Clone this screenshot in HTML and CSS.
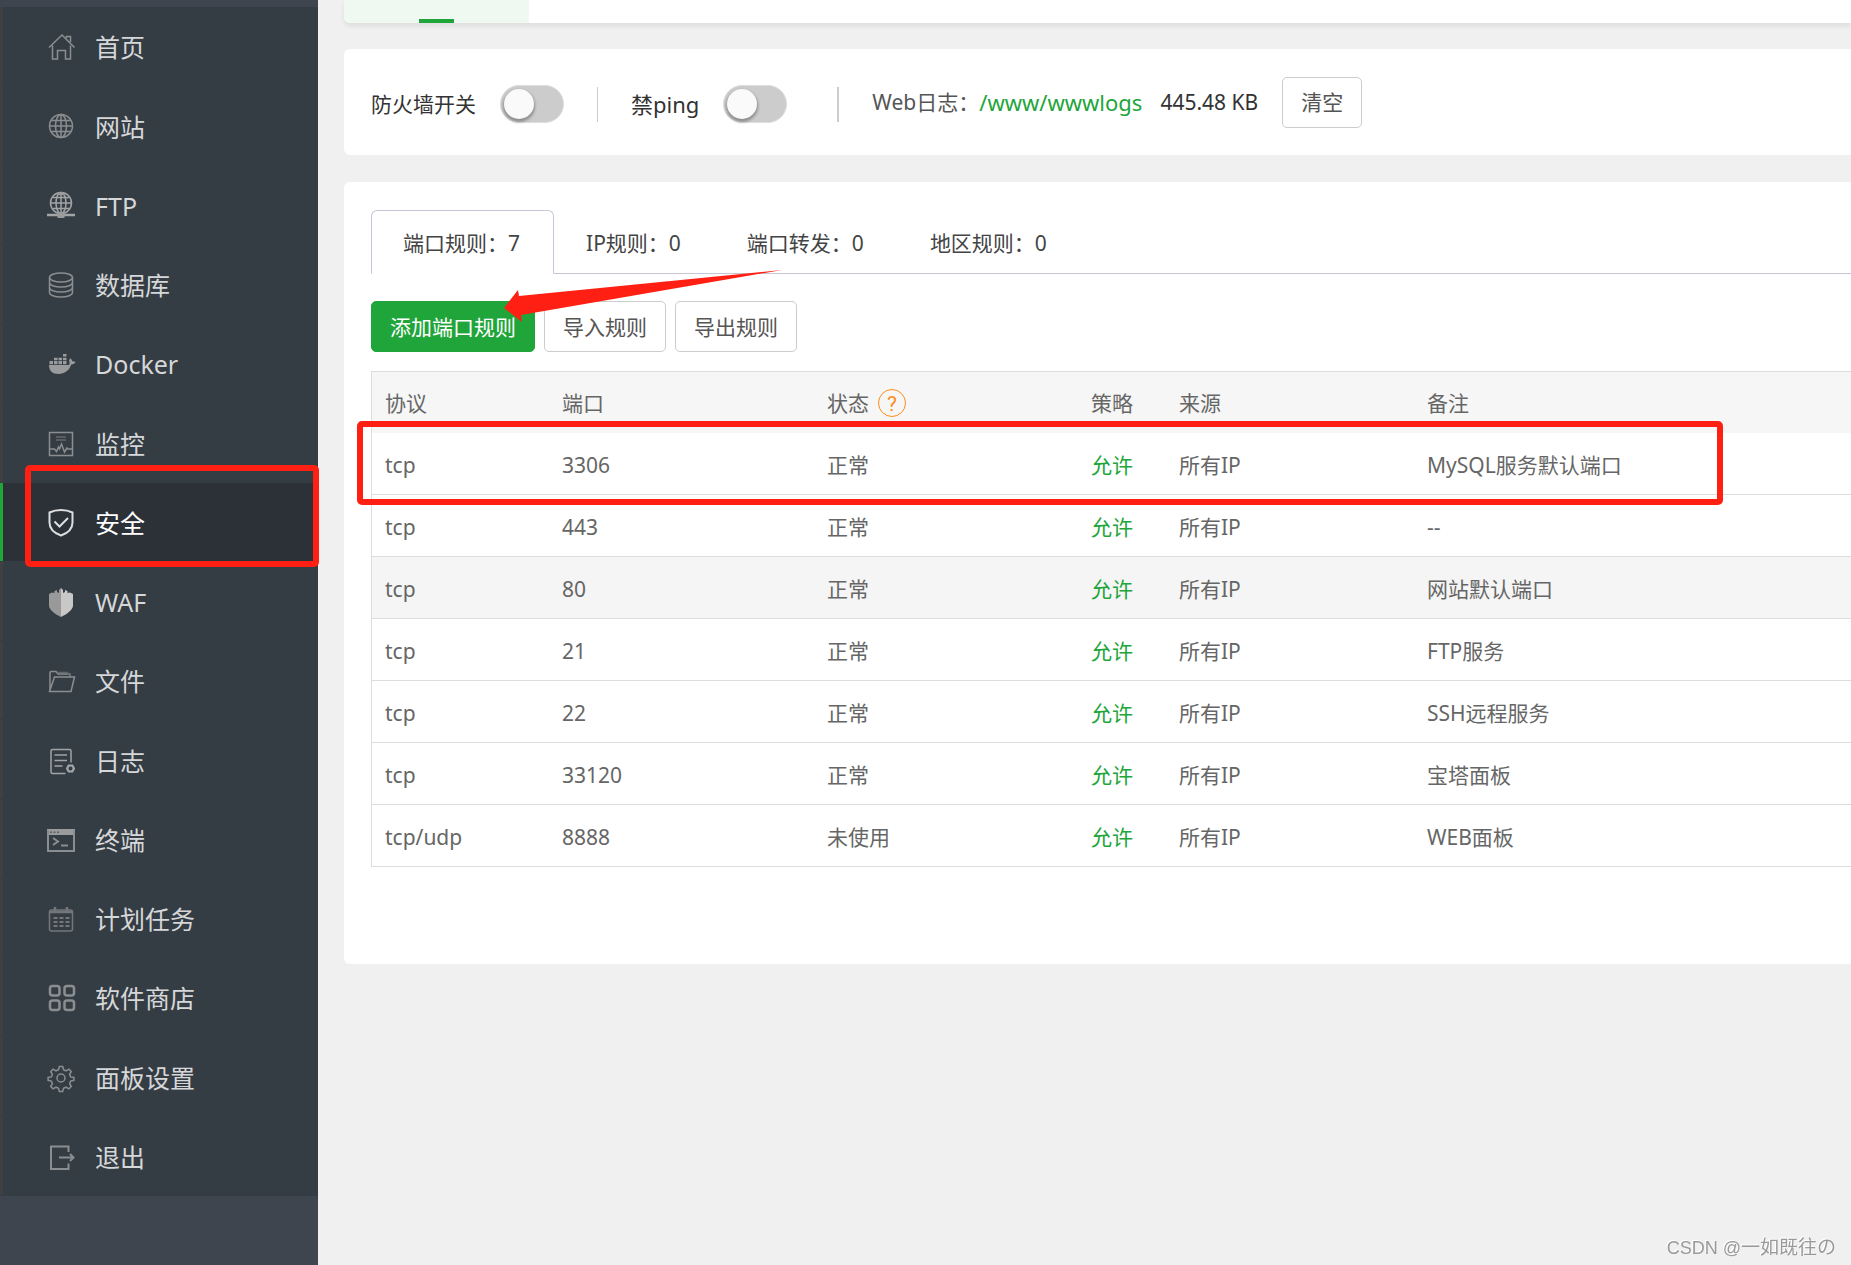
FILE: index.html
```html
<!DOCTYPE html>
<html lang="zh-CN">
<head>
<meta charset="utf-8">
<meta name="viewport" content="width=device-width, initial-scale=1">
<title>安全</title>
<link rel="stylesheet" href="styles.css">
</head>
<body>
<div class="layout">
  <nav class="sidebar">
    <ul class="menu">
      <li><a href="#home"><svg class="icon" viewBox="0 0 28 28"><path d="M2 14.500 15 2l12.500 12.500M5.500 12.500V26h5v-8.500h8V26h5V12.500M19.500 5V3.500h4V9"/></svg>首页</a></li>
      <li><a href="#site"><svg class="icon" viewBox="0 0 28 28"><circle cx="14" cy="13" r="11.500"/><ellipse cx="14" cy="13" rx="5.500" ry="11.500"/><path d="M14 1.500v23M2.500 13h23M4.500 7.500h19M4.500 18.500h19"/></svg>网站</a></li>
      <li><a href="#ftp"><svg class="icon bright" viewBox="0 0 28 28"><circle cx="14" cy="11" r="10.500"/><ellipse cx="14" cy="11" rx="5" ry="10.500"/><path d="M14 .5v21M3.500 11h21M6 5.500h16M6 16.500h16"/><path d="M0 23h28" stroke-width="2.500"/><path class="solid" d="M10.500 20.500h7V26h-7zM11 0h6v3h-6z"/></svg>FTP</a></li>
      <li><a href="#database"><svg class="icon" viewBox="0 0 28 28"><ellipse cx="14" cy="6.500" rx="11.500" ry="4.500"/><path d="M2.500 6.500v15c0 2.500 5 4.500 11.500 4.500s11.500-2 11.500-4.500v-15M2.500 11.500C2.500 14 7.500 16 14 16s11.500-2 11.500-4.500M2.500 16.500C2.500 19 7.500 21 14 21s11.500-2 11.500-4.500"/></svg>数据库</a></li>
      <li><a href="#docker"><svg class="icon bright" viewBox="0 0 28 28"><path class="solid" d="M2 15h18.500c1.500 0 2.500-.5 2-2.500-.6-1.600-.3-3 .8-4.200 1.300.8 1.900 1.900 2 3.100 1.200-.3 2.200 0 3.200.7-.8 1.700-2.200 2.500-4.300 2.500C22 21 17.500 24 11.500 24 5.500 24 2 21 2 15zM2.500 11h3.500v3.300H2.500zM7 11h3.500v3.300H7zM11.500 11h3.500v3.300h-3.500zM16 11h3.500v3.300H16zM7 7.700h3.500v2.500H7zM11.500 7.700h3.500v2.500h-3.500zM16 7.700h3.500v2.500H16zM16 4h3.500v2.500H16z"/></svg>Docker</a></li>
      <li><a href="#monitor"><svg class="icon" viewBox="0 0 28 28"><path d="M2.500 2.500h23v23h-23zM3 19h4.500l2 2.500 2-4.500 1 2 2-5 3 8 2.500-4 1 1h4.500"/><path class="faint" d="M9 7h10M9 10h10"/></svg>监控</a></li>
      <li class="active"><a href="#security"><svg class="icon shield" viewBox="0 0 28 28"><path d="M14 1c4 0 8 .8 11.500 2.500v10c0 6-4.500 10.500-11.500 13-7-2.500-11.500-7-11.500-13v-10C6 1.800 10 1 14 1zM7.500 12.500l5 5 8.500-8.500"/></svg>安全</a><span class="mark"></span></li>
      <li><a href="#waf"><svg class="icon" viewBox="0 0 28 28"><path class="waf-left" d="M14 0l-2 2v3L10 4V2L7.500 3v2L5 4.500 2 6v12c1 4.500 6 8 12 11z"/><path class="waf-right" d="M14 0l2 2v3l2-1V2l2.500 1v2l2.500-.5L26 6v12c-1 4.500-6 8-12 11z"/></svg>WAF</a></li>
      <li><a href="#files"><svg class="icon" viewBox="0 0 28 28"><path d="M3 24V5.500Q3 4.500 4 4.500h5l2 2.500h12v3M2.500 24.500 7.500 10H27.500L24 24.500z"/><path class="faint" d="M10 5.500h10l4 2.500"/></svg>文件</a></li>
      <li><a href="#logs"><svg class="icon bright" viewBox="0 0 28 28"><path d="M18.500 26.500H5.500Q4 26.500 4 25V4Q4 2.500 5.500 2.500h17Q24 2.500 24 4v11.500M7.500 8h12.500M7.500 13.500h12.500M7.500 19h8"/><circle cx="23.500" cy="21.500" r="3" stroke-width="2"/><path stroke-width="2" d="M19 21.500h1.500M26.500 21.500H28M21.300 17.600l.7 1.300M25 24.100l.7 1.300M25.700 17.600l-.7 1.300M22 24.100l-.7 1.300"/></svg>日志</a></li>
      <li><a href="#terminal"><svg class="icon" viewBox="0 0 28 28"><path class="solid" d="M0 3h28v6H0z"/><path stroke-width="2" d="M1 4v21h26V4M6 12l5 3.500L6 19M14 19.500h7"/><path class="dots" d="M3 6.200h2M6.500 6.200h2M10 6.200h2"/></svg>终端</a></li>
      <li><a href="#cron"><svg class="icon dim" viewBox="0 0 28 28"><rect x="2.500" y="5" width="23" height="21" rx="2"/><path stroke-width="2.500" d="M3 7h22M8 2v5M20 2v5"/><path stroke-width="2" stroke-dasharray="4 2" d="M6.500 13h16M6.500 17h16M6.500 21h16"/></svg>计划任务</a></li>
      <li><a href="#store"><svg class="icon" viewBox="0 0 28 28"><g stroke-width="2.500"><rect x="3" y="2" width="9.500" height="9.500" rx="2.500"/><rect x="17.500" y="2" width="9.500" height="9.500" rx="2.500"/><rect x="3" y="16.500" width="9.500" height="9.500" rx="2.500"/><rect x="17.500" y="16.500" width="9.500" height="9.500" rx="2.500"/></g></svg>软件商店</a></li>
      <li><a href="#settings"><svg class="icon" viewBox="0 0 28 28"><circle cx="14" cy="14" r="4"/><path d="M12.300 2.500h3.400l.8 3.300 2.500 1 2.900-1.700 2.400 2.400-1.700 2.900 1 2.500 3.300.6v2.800l-3.300.8-1 2.500 1.700 2.900-2.400 2.400-2.900-1.700-2.500 1-.8 3.300h-3.400l-.8-3.300-2.500-1-2.900 1.700-2.400-2.400 1.700-2.900-1-2.500-3.300-.8v-2.800l3.300-.6 1-2.500-1.700-2.900 2.400-2.400 2.900 1.700 2.500-1z"/></svg>面板设置</a></li>
      <li><a href="#logout"><svg class="icon" viewBox="0 0 28 28"><path stroke-width="2" d="M21.500 9V3.500H4v22.500h17.500V20.500M12 14.500h14M23 11l3.500 3.500L23 18"/></svg>退出</a></li>
    </ul>
  </nav>

  <main class="main">
    <div class="topbar"><div class="topbar-tab"></div></div>

    <section class="card switches">
      <label class="switch-label" for="firewall">防火墙开关</label>
      <input class="toggle" type="checkbox" id="firewall">
      <span class="divider"></span>
      <label class="switch-label large" for="ping">禁ping</label>
      <input class="toggle" type="checkbox" id="ping">
      <span class="divider wide"></span>
      <div class="weblog">
        <span>Web日志：</span><a href="#wwwlogs">/www/wwwlogs</a><span class="size">445.48 KB</span>
        <button class="btn" type="button">清空</button>
      </div>
    </section>

    <section class="card rules">
      <div class="tabs" role="tablist">
        <button class="tab selected" type="button" role="tab" aria-selected="true">端口规则：7</button>
        <button class="tab" type="button" role="tab">IP规则：0</button>
        <button class="tab" type="button" role="tab">端口转发：0</button>
        <button class="tab" type="button" role="tab">地区规则：0</button>
      </div>
      <div class="actions">
        <button class="btn primary" type="button">添加端口规则</button>
        <button class="btn" type="button">导入规则</button>
        <button class="btn" type="button">导出规则</button>
        <svg class="arrow" viewBox="0 0 278 52"><path d="M0 38 14 20 15 26 278 0 17 45 18 52z"/></svg>
      </div>
      <div class="table-wrap">
        <table class="table">
          <colgroup><col class="c-protocol"><col class="c-port"><col class="c-status"><col class="c-policy"><col class="c-source"><col></colgroup>
          <thead>
            <tr><th>协议</th><th>端口</th><th><span class="with-help">状态<a class="help" href="#help">?</a></span></th><th>策略</th><th>来源</th><th>备注</th></tr>
          </thead>
          <tbody>
            <tr><td>tcp</td><td>3306</td><td>正常</td><td class="allow">允许</td><td>所有IP</td><td>MySQL服务默认端口</td></tr>
            <tr><td>tcp</td><td>443</td><td>正常</td><td class="allow">允许</td><td>所有IP</td><td>--</td></tr>
            <tr class="hovered"><td>tcp</td><td>80</td><td>正常</td><td class="allow">允许</td><td>所有IP</td><td>网站默认端口</td></tr>
            <tr><td>tcp</td><td>21</td><td>正常</td><td class="allow">允许</td><td>所有IP</td><td>FTP服务</td></tr>
            <tr><td>tcp</td><td>22</td><td>正常</td><td class="allow">允许</td><td>所有IP</td><td>SSH远程服务</td></tr>
            <tr><td>tcp</td><td>33120</td><td>正常</td><td class="allow">允许</td><td>所有IP</td><td>宝塔面板</td></tr>
            <tr><td>tcp/udp</td><td>8888</td><td>未使用</td><td class="allow">允许</td><td>所有IP</td><td>WEB面板</td></tr>
          </tbody>
        </table>
        <span class="mark"></span>
      </div>
    </section>
  </main>
</div>
<div class="watermark"><span class="site">CSDN @</span>一如既往の</div>
</body>
</html>
```
FILE: styles.css
```css
* {
  box-sizing: border-box;
}

body {
  margin: 0;
  background: #f0f0f0;
  color: #333;
  font-family: "Noto Sans", "Noto Sans CJK SC", sans-serif;
  font-size: 21px;
  line-height: 30px;
  overflow-x: hidden;
}

button {
  font: inherit;
  white-space: nowrap;
}

a {
  text-decoration: none;
}

.layout {
  display: flex;
  min-height: 100vh;
}

/* Sidebar */
.sidebar {
  flex: 0 0 318px;
  padding-top: 7px;
  background: #3e454f;
}

.menu {
  margin: 0;
  padding: 0;
  list-style: none;
}

.menu li {
  position: relative;
  height: 79px;
  border-bottom: 1px solid #353d44;
}

.menu li:nth-child(4n+2) {
  height: 80px;
}

.menu a {
  display: flex;
  align-items: center;
  gap: 20px;
  height: 100%;
  padding: 2px 0 0 44px;
  border-left: 3px solid #404040;
  background: #353d44;
  color: #d6d7d9;
  font-size: 25px;
}

.menu .active a {
  border-left-color: #20a53a;
  background: #2c3138;
  color: #fff;
}

.icon {
  width: 28px;
  height: 28px;
  overflow: visible;
  fill: none;
  stroke: #8b8e90;
  stroke-width: 1.5;
}

.icon .solid {
  fill: #999b9c;
  stroke: none;
}

.icon .faint {
  stroke: #63686d;
}

.icon .dots {
  stroke: #5c6166;
}

.icon .waf-left {
  fill: #999;
  stroke: none;
}

.icon .waf-right {
  fill: #c8c8c8;
  stroke: none;
}

.icon.bright {
  stroke: #a2a4a5;
}

.icon.dim {
  stroke: #73777b;
}

.icon.shield {
  stroke: #dcdddf;
  stroke-width: 2;
}

/* Red highlight frames */
.mark {
  position: absolute;
  border: 6px solid #ff2013;
  border-radius: 5px;
  pointer-events: none;
}

.menu .mark {
  inset: -18px -1px -6px 25px;
  z-index: 2;
}

.table-wrap .mark {
  top: 50px;
  left: -14px;
  right: 128px;
  height: 84px;
}

/* Main area */
.main {
  flex: 1;
  min-width: 0;
  padding-left: 26px;
}

.topbar {
  height: 23px;
  border-radius: 0 0 0 6px;
  background: #fff;
  box-shadow: 0 3px 5px rgba(0, 0, 0, 0.08);
}

.topbar-tab {
  display: flex;
  align-items: flex-end;
  justify-content: center;
  width: 185px;
  height: 23px;
  border-radius: 0 0 0 6px;
  background: #eff9f1;
}

.topbar-tab::after {
  content: "";
  width: 35px;
  height: 4px;
  background: #20a53a;
}

.card {
  border-radius: 6px 0 0 6px;
  background: #fff;
}

.switches {
  display: flex;
  align-items: center;
  height: 106px;
  margin-top: 26px;
  padding-left: 27px;
}

.toggle {
  appearance: none;
  width: 64px;
  height: 38px;
  margin: 3px 0 0 24px;
  padding: 3px 4px;
  border: 1px solid #ddd;
  border-radius: 19px;
  background: #ccc;
}

.toggle::before {
  content: "";
  display: block;
  width: 30px;
  height: 30px;
  margin-left: -1px;
  border-radius: 50%;
  background: #fafafa;
  box-shadow: 0 2px 3px 1px rgba(0, 0, 0, 0.3);
}

.switch-label {
  padding-top: 3px;
}

.switch-label.large {
  font-size: 22px;
}

.divider {
  width: 1px;
  height: 35px;
  margin: 4px 33px 0;
  background: #ccc;
}

.divider.wide {
  width: 2px;
  margin-left: 50px;
}

.weblog {
  display: flex;
  align-items: center;
  color: #555;
}

.weblog a {
  color: #20a53a;
  font-size: 22px;
}

.size {
  margin: 0 24px 0 18px;
  color: #333;
}

.btn {
  height: 51px;
  padding: 0 18px;
  border: 1px solid #ccc;
  border-radius: 5px;
  background: #fff;
  color: #555;
}

.btn.primary {
  border-color: #20a53a;
  background: #20a53a;
  color: #fff;
}

/* Rules card */
.rules {
  margin-top: 27px;
  padding: 28px 0 97px 27px;
}

.tabs {
  display: flex;
  box-shadow: inset 0 -1px #c6c6d6;
}

.tab {
  height: 64px;
  padding: 2px 33px 0 31px;
  border: 1px solid transparent;
  background: none;
  color: #444;
}

.tab.selected {
  border-color: #c6c6d6;
  border-bottom-color: #fff;
  border-radius: 6px 6px 0 0;
  background: #fff;
}

.actions {
  position: relative;
  display: flex;
  gap: 9px;
  margin: 27px 0 19px;
}

.arrow {
  position: absolute;
  top: -31px;
  left: 133px;
  width: 278px;
  height: 52px;
  fill: #ff2013;
}

.table-wrap {
  position: relative;
}

.table {
  width: 100%;
  border: 1px solid #ddd;
  border-width: 1px 0 0 1px;
  border-spacing: 0;
  table-layout: fixed;
  color: #666;
}

.c-protocol { width: 177px; }
.c-port { width: 265px; }
.c-status { width: 264px; }
.c-policy { width: 88px; }
.c-source { width: 248px; }

.table th,
.table td {
  height: 62px;
  padding: 2px 0 0 13px;
  border-bottom: 1px solid #ddd;
  font-weight: 400;
  text-align: left;
  white-space: nowrap;
}

.table th {
  height: 61px;
  padding-top: 0;
  border-bottom: 0;
  background: #f6f6f6;
}

.table .hovered td {
  background: #f5f5f5;
}

.table .allow {
  color: #20a53a;
}

.with-help {
  display: flex;
  align-items: center;
  gap: 9px;
}

.help {
  width: 28px;
  height: 28px;
  border: 1px solid #ff8c1a;
  border-radius: 50%;
  color: #ff8c1a;
  font-family: Roboto, sans-serif;
  line-height: 28px;
  text-align: center;
}

.watermark {
  position: fixed;
  right: 15px;
  bottom: 2px;
  color: #999;
  font-family: "Liberation Sans", "Noto Sans CJK SC", sans-serif;
  font-size: 19px;
  text-shadow: -1px -1px #fff;
}

.watermark .site {
  font-size: 18px;
}
```
